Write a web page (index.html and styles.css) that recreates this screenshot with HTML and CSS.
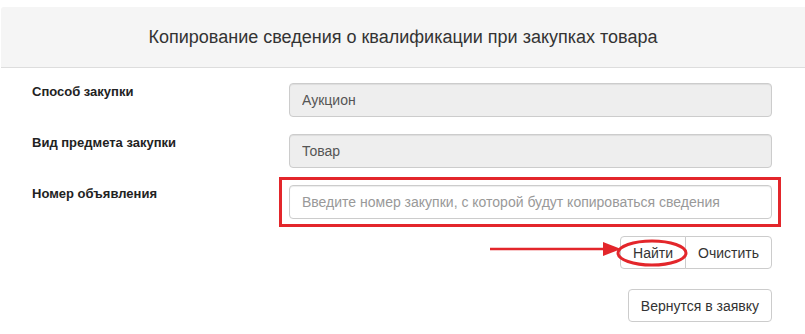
FILE: index.html
```html
<!DOCTYPE html>
<html lang="ru">
<head>
    <meta charset="UTF-8">
    <meta name="viewport" content="width=device-width, initial-scale=1.0">
    <title>Копирование сведения</title>
    <link rel="stylesheet" href="styles.css">
</head>
<body>
    <div class="panel-heading">Копирование сведения о квалификации при закупках товара</div>

    <div class="form">
        <div class="form-row">
            <label class="form-label">Способ закупки</label>
            <div class="form-field">
                <input class="form-control" type="text" value="Аукцион" readonly>
            </div>
        </div>
        <div class="form-row">
            <label class="form-label">Вид предмета закупки</label>
            <div class="form-field">
                <input class="form-control" type="text" value="Товар" readonly>
            </div>
        </div>
        <div class="form-row">
            <label class="form-label" for="purchase-number">Номер объявления</label>
            <div class="form-field marked">
                <input class="form-control" type="text" id="purchase-number" placeholder="Введите номер закупки, с которой будут копироваться сведения">
                <span class="mark-box"></span>
            </div>
        </div>

        <div class="actions">
            <svg class="pointer" width="200" height="40" viewBox="0 0 200 40">
                <line x1="0" y1="13" x2="118" y2="13" stroke="#e3262b" stroke-width="2.5"/>
                <polygon points="113,6 131,13 113,20" fill="#e3262b"/>
                <ellipse cx="162" cy="17" rx="34" ry="12" fill="none" stroke="#e3262b" stroke-width="3"/>
            </svg>
            <div class="btn-group">
                <button class="btn">Найти</button>
                <button class="btn">Очистить</button>
            </div>
        </div>
        <div class="actions">
            <button class="btn">Вернутся в заявку</button>
        </div>
    </div>
</body>
</html>
```

FILE: styles.css
```css
body, html {
    margin: 0;
    padding: 0;
    background: #fff;
    color: #333;
    font-family: "Liberation Sans", Arial, sans-serif;
    font-size: 14px;
}
.panel-heading {
    margin: 7px 0 0 1px;
    height: 60px;
    line-height: 60px;
    background: #f5f5f5;
    border-bottom: 1px solid #ddd;
    border-top-left-radius: 3px;
    text-align: center;
    font-size: 18px;
    color: #333;
}
.form {
    position: relative;
    padding: 15px 33px 0 32px;
}
.form-row {
    display: flex;
    margin-bottom: 17px;
}
.form-label {
    width: 257px;
    flex-shrink: 0;
    padding-top: 1px;
    font-size: 13px;
    font-weight: bold;
    line-height: 16px;
    color: #222;
}
.form-field {
    flex: 1;
    position: relative;
}
.form-control {
    display: block;
    box-sizing: border-box;
    width: 100%;
    height: 34px;
    padding: 6px 12px;
    border: 1px solid #ccc;
    border-radius: 4px;
    font-family: inherit;
    font-size: 14px;
    color: #555;
    background: #fff;
    box-shadow: inset 0 1px 1px rgba(0, 0, 0, 0.075);
}
.form-control[readonly] {
    background: #eee;
}
.form-control::placeholder {
    color: #999;
}
.mark-box {
    position: absolute;
    top: -8px;
    left: -10px;
    right: -9px;
    bottom: -8px;
    border: 3px solid #e3262b;
}
.actions {
    position: relative;
    display: flex;
    justify-content: flex-end;
    margin-top: 20px;
}
.form-row + .actions {
    margin-top: 3px;
}
.pointer {
    position: absolute;
    left: 458px;
    top: 0;
}
.btn-group {
    display: flex;
}
.btn {
    height: 33px;
    padding: 6px 12px;
    border: 1px solid #ccc;
    border-radius: 4px;
    background: #fff;
    color: #333;
    font-family: inherit;
    font-size: 14px;
    cursor: pointer;
}
.btn-group .btn:first-child {
    border-top-right-radius: 0;
    border-bottom-right-radius: 0;
}
.btn-group .btn + .btn {
    margin-left: -1px;
    border-top-left-radius: 0;
    border-bottom-left-radius: 0;
}
```
